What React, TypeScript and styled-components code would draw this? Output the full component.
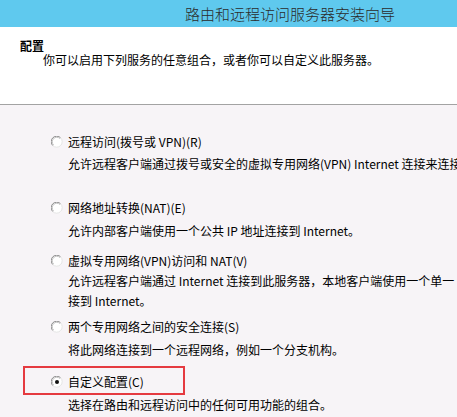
import React from 'react';
import styled, { createGlobalStyle } from 'styled-components';

const GlobalStyle = createGlobalStyle`
  html, body {
    margin: 0;
    padding: 0;
    background: #f7f4f7;
  }
  body {
    font-family: "Noto Sans CJK SC", "Liberation Sans", sans-serif;
    font-size: 12px;
    color: #000;
  }
`;

const Wizard = styled.div`
  width: 457px;
  height: 417px;
  overflow: hidden;
  display: flex;
  flex-direction: column;
  background: #f7f4f7;
`;

const TitleBar = styled.div`
  height: 27px;
  flex-shrink: 0;
  background: #5fc9ee;
  display: flex;
  align-items: center;
  padding-left: 185px;
  box-sizing: border-box;
`;

const Title = styled.div`
  font-size: 15px;
  color: #2b2b2b;
  font-weight: 300;
  white-space: nowrap;
  letter-spacing: 0;
`;

const Intro = styled.div`
  height: 78px;
  flex-shrink: 0;
  background: #fff;
  border-bottom: 1px solid #a3a3a3;
  box-sizing: border-box;
  padding: 12px 0 0 20px;
`;

const IntroHeading = styled.div`
  font-weight: 700;
  line-height: 14px;
`;

const IntroText = styled.div`
  padding-left: 23px;
  line-height: 14px;
  white-space: nowrap;
`;

const OptionList = styled.div`
  display: flex;
  flex-direction: column;
  padding-left: 51px;
`;

const Option = styled.div<{ $top: number }>`
  margin-top: ${(p) => p.$top}px;
  display: flex;
  flex-direction: column;
`;

const LabelRow = styled.label<{ $marked?: boolean }>`
  position: relative;
  display: flex;
  align-items: center;
  gap: 5px;
  height: 20px;
  line-height: 20px;
  white-space: nowrap;

  ${(p) =>
    p.$marked &&
    `
    &::after {
      content: '';
      position: absolute;
      left: -28px;
      top: -6px;
      width: 162px;
      height: 29px;
      border: 2px solid #e53a40;
      box-sizing: border-box;
      pointer-events: none;
    }
  `}
`;

const Description = styled.div<{ $gap: number }>`
  margin-top: ${(p) => p.$gap}px;
  padding-left: 17px;
  line-height: 20px;
  white-space: nowrap;
`;

const RadioSvg = styled.svg`
  flex-shrink: 0;
  display: block;
`;

function Radio({ checked }: { checked?: boolean }) {
  return (
    <RadioSvg width="12" height="12" viewBox="0 0 12 12">
      <circle cx="6" cy="6" r="5.5" fill="#fff" />
      {/* sunken edge: dark upper-left, light lower-right */}
      <path d="M1.8 9.6 A5 5 0 0 1 9.6 1.8" fill="none" stroke="#8a8a8a" strokeWidth="1" />
      <path d="M2.6 9.0 A4 4 0 0 1 9.0 2.6" fill="none" stroke="#c4c4c4" strokeWidth="1" />
      <path d="M9.6 1.8 A5 5 0 0 1 1.8 9.6" fill="none" stroke="#e3e3e3" strokeWidth="1" />
      {checked && <circle cx="6" cy="6" r="2" fill="#111" />}
    </RadioSvg>
  );
}

type Service = {
  label: string;
  lines: string[];
  top: number;
  gap: number;
  checked?: boolean;
};

const services: Service[] = [
  {
    label: '远程访问(拨号或 VPN)(R)',
    lines: ['允许远程客户端通过拨号或安全的虚拟专用网络(VPN) Internet 连接来连接到此服务器。'],
    top: 27,
    gap: 2,
  },
  {
    label: '网络地址转换(NAT)(E)',
    lines: ['允许内部客户端使用一个公共 IP 地址连接到 Internet。'],
    top: 24,
    gap: 3,
  },
  {
    label: '虚拟专用网络(VPN)访问和 NAT(V)',
    lines: ['允许远程客户端通过 Internet 连接到此服务器，本地客户端使用一个单一', '接到 Internet。'],
    top: 10,
    gap: 0,
  },
  {
    label: '两个专用网络之间的安全连接(S)',
    lines: ['将此网络连接到一个远程网络，例如一个分支机构。'],
    top: 6,
    gap: 3,
  },
  {
    label: '自定义配置(C)',
    lines: ['选择在路由和远程访问中的任何可用功能的组合。'],
    top: 12,
    gap: 3,
    checked: true,
  },
];

export default function App() {
  return (
    <>
      <GlobalStyle />
      <Wizard>
        <TitleBar>
          <Title>路由和远程访问服务器安装向导</Title>
        </TitleBar>
        <Intro>
          <IntroHeading>配置</IntroHeading>
          <IntroText>你可以启用下列服务的任意组合，或者你可以自定义此服务器。</IntroText>
        </Intro>
        <OptionList>
          {services.map((s) => (
            <Option key={s.label} $top={s.top}>
              <LabelRow $marked={s.checked}>
                <Radio checked={s.checked} />
                {s.label}
              </LabelRow>
              <Description $gap={s.gap}>
                {s.lines.map((line) => (
                  <div key={line}>{line}</div>
                ))}
              </Description>
            </Option>
          ))}
        </OptionList>
      </Wizard>
    </>
  );
}
